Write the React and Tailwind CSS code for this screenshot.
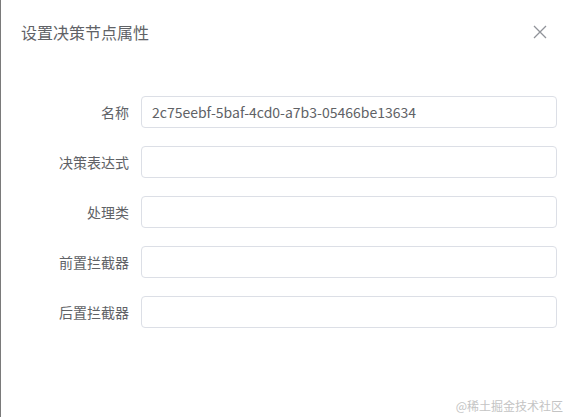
import React from 'react';

const fields = [
    { label: '名称', value: '2c75eebf-5baf-4cd0-a7b3-05466be13634' },
    { label: '决策表达式', value: '' },
    { label: '处理类', value: '' },
    { label: '前置拦截器', value: '' },
    { label: '后置拦截器', value: '' }
];

const font = { fontFamily: '"Noto Sans CJK SC", "Noto Sans", sans-serif' };

export default function App() {
    return (
        <div
            className="relative w-[568px] h-[417px] bg-white border-l border-[#7a7a7a] overflow-hidden"
            style={font}
        >
            {/* Header */}
            <div className="flex items-center justify-between h-[64px] pl-[20px] pr-[20px]">
                <span className="text-[16px] leading-[24px] text-[#606266]">设置决策节点属性</span>
                <svg width="14" height="14" viewBox="0 0 14 14" className="mr-[1px]">
                    <path d="M1 1 L13 13 M13 1 L1 13" stroke="#909399" strokeWidth="1.3" fill="none" />
                </svg>
            </div>

            {/* Form */}
            <div className="pt-[32px] pl-[20px] pr-[11px]">
                {fields.map((f) => (
                    <div key={f.label} className="flex items-center mb-[18px]">
                        <label className="w-[120px] pr-[12px] text-right text-[14px] text-[#606266] shrink-0">
                            {f.label}
                        </label>
                        <div className="flex-1 h-[32px] flex items-center border border-[#dcdfe6] rounded-[4px] px-[10px] text-[14px] text-[#606266]">
                            {f.value}
                        </div>
                    </div>
                ))}
            </div>

            {/* Watermark */}
            <div className="absolute right-[5px] bottom-[3px] text-[12px] leading-[16px] text-[#c4c4c4]">
                @稀土掘金技术社区
            </div>
        </div>
    );
}
